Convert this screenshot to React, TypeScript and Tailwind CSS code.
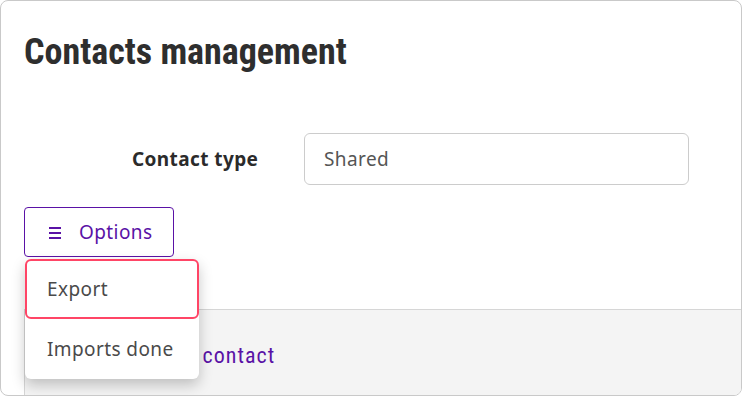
export default function App() {
  return (
    <div className="w-[742px] h-[396px] bg-white">
      <div className="relative h-full w-full overflow-hidden rounded-lg border border-[#c9c9c9] bg-white flex flex-col">
        {/* Header */}
        <h1 className="pl-[23px] pt-[31px] text-[36px] leading-[40px] font-bold text-[#2e2e2e] [font-family:'Roboto_Condensed',sans-serif]">
          Contacts management
        </h1>

        {/* Contact type row */}
        <div className="mt-[61px] flex items-center">
          <label className="ml-[131px] w-[172px] text-[19px] tracking-[0.4px] font-bold text-[#2b2b2b] [font-family:'Noto_Sans',sans-serif]">
            Contact type
          </label>
          <div className="flex h-[52px] w-[385px] items-center rounded-md border border-[#cccccc] px-[19px] text-[19px] tracking-[0.4px] text-[#555555] [font-family:'Noto_Sans',sans-serif]">
            Shared
          </div>
        </div>

        {/* Options */}
        <div className="relative ml-[23px] mt-[22px]">
          <button className="flex h-[50px] w-[150px] items-center gap-[17px] rounded border border-[#5a12a6] pl-[23px] text-[19px] tracking-[0.4px] text-[#5a12a6] [font-family:'Noto_Sans',sans-serif]">
            <svg width="14" height="16" viewBox="0 0 14 16" className="mt-[1px]">
              <rect x="1" y="2" width="12" height="2" fill="#5a12a6" />
              <rect x="1" y="7" width="12" height="2" fill="#5a12a6" />
              <rect x="1" y="12" width="12" height="2" fill="#5a12a6" />
            </svg>
            Options
          </button>

          {/* Dropdown */}
          <div className="absolute left-[1px] top-[52px] z-10 w-[174px] rounded-md bg-white shadow-[0_6px_14px_rgba(0,0,0,0.22)] [font-family:'Noto_Sans',sans-serif]">
            <div className="flex h-[60px] items-center rounded-md border-2 border-[#ff4566] pl-[20px] text-[19px] tracking-[0.4px] text-[#4a4a4a]">
              Export
            </div>
            <div className="flex h-[60px] items-center pl-[22px] text-[19px] tracking-[0.4px] text-[#4a4a4a]">
              Imports done
            </div>
          </div>
        </div>

        {/* Gray section */}
        <div className="ml-[23px] mt-[52px] flex-1 border-l border-t border-[#d6d6d6] bg-[#f4f4f4]">
          <div className="pl-[134px] pt-[29px] text-[22px] tracking-[1px] text-[#5a12a6] [font-family:'Roboto_Condensed',sans-serif]">
            Add contact
          </div>
        </div>
      </div>
    </div>
  );
}
